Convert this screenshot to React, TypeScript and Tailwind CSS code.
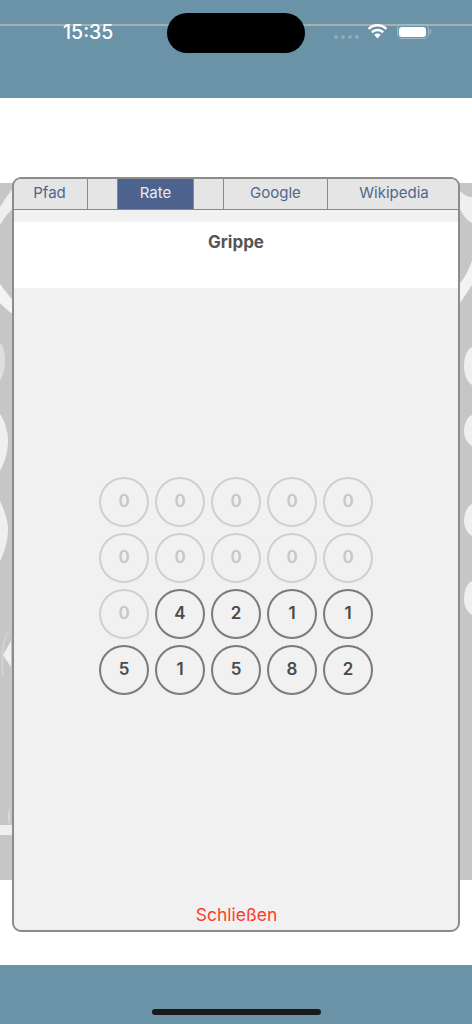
const rows = [
  [0, 0, 0, 0, 0],
  [0, 0, 0, 0, 0],
  [0, 4, 2, 1, 1],
  [5, 1, 5, 8, 2],
];

function Wifi() {
  return (
    <svg width="21" height="15" viewBox="1 1 20 14" preserveAspectRatio="none" className="block">
      <path d="M11 3.400c3 0 5.700 1.150 7.750 3.050l1.500-1.600C17.800 2.550 14.600 1.100 11 1.100S4.200 2.550 1.750 4.850l1.500 1.600C5.300 4.550 8 3.400 11 3.400z" fill="#fff" />
      <path d="M11 7.800c1.800 0 3.400.7 4.600 1.800l1.550-1.650C15.550 6.450 13.400 5.500 11 5.500s-4.550.95-6.150 2.450L6.400 9.600C7.600 8.500 9.200 7.800 11 7.800z" fill="#fff" />
      <path d="M11 9.900c-1.200 0-2.300.45-3.100 1.200L11 14.600l3.100-3.500c-.8-.75-1.900-1.200-3.100-1.200z" fill="#fff" />
    </svg>
  );
}

function Battery() {
  return (
    <div className="flex items-center gap-[1px]">
      <div className="flex h-[15px] w-[32px] items-center justify-center rounded-[5px] border border-[#a3bac6] p-[1.500px]">
        <div className="h-full w-full rounded-[3px] bg-white" />
      </div>
      <div className="h-[5px] w-[1.500px] rounded-r-sm bg-[#a3bac6]" />
    </div>
  );
}

function Backdrop() {
  return (
    <svg className="absolute left-0 top-[183px] h-[697px] w-[472px]" viewBox="0 0 472 697" preserveAspectRatio="none">
      <rect width="472" height="697" fill="#c6c6c6" />
      <path d="M0 24C5 16 9 10 14 4V24C9 29 4 35 0 42Z" fill="#efefef" />
      <path d="M0 101C5 108 10 114 14 118V132C8 128 4 124 0 120Z" fill="#f3f3f3" />
      <path d="M0 160C3 162 5 168 5 178C5 188 2 194 0 198Z" fill="#dedede" />
      <path d="M0 231C4 236 8 248 8 258C8 272 3 282 0 288Z" fill="#efefef" />
      <path d="M0 318C4 326 8 338 8 346C8 360 3 372 0 378Z" fill="#efefef" />
      <path d="M11 458 3 472 11 484Z" fill="#f0f0f0" />
      <path d="M9 448C3 456 1 470 3 492" fill="none" stroke="#d2d2d2" strokeWidth="2" />
      <path d="M10 625C7 630 7 638 10 642Z" fill="#d8d8d8" />
      <rect y="642" width="14" height="10" fill="#efefef" />
      <path d="M460 26C464 34 468 38 472 40V14C468 14 464 12 460 8Z" fill="#efefef" />
      <path d="M460 120C464 114 468 108 472 102V78C468 88 464 96 460 100Z" fill="#f3f3f3" />
      <path d="M472 164C467 166 464 174 464 183C464 192 468 200 472 202Z" fill="#efefef" />
      <path d="M472 232C467 234 464 241 464 248C464 255 468 261 472 263Z" fill="#efefef" />
      <path d="M472 321C467 323 464 331 464 338C464 345 468 351 472 353Z" fill="#efefef" />
      <path d="M472 398C467 400 464 408 464 416C464 424 468 430 472 432Z" fill="#efefef" />
    </svg>
  );
}

function Tab({ label, className }: { label?: string; className: string }) {
  return (
    <div className={`flex h-full items-center justify-center border-r border-[#6a93a8] pb-[2px] text-[15px] ${className}`}>
      {label}
    </div>
  );
}

export default function App() {
  return (
    <div className="relative flex h-[1024px] w-[472px] flex-col overflow-hidden bg-white font-['Inter','Liberation_Sans',sans-serif]">
      <Backdrop />

      <header className="relative flex h-[98px] items-start bg-[#6a93a8]">
        <div className="absolute left-0 right-0 top-[24px] h-[2px] bg-[#a9aeb0]" />
        <div className="absolute left-[167px] top-[13px] h-[40px] w-[138px] rounded-[20px] bg-black" />
        <div className="relative flex w-full items-center pl-[63px] pr-[41px] pt-[22px]">
          <span className="text-[19.500px] font-medium leading-[21px] text-white">15:35</span>
          <div className="ml-auto flex items-center">
            <div className="mr-[8px] flex gap-[3px] pt-[9px]">
              <span className="h-[4px] w-[4px] rounded-full bg-[#8eabbb]" />
              <span className="h-[4px] w-[4px] rounded-full bg-[#8eabbb]" />
              <span className="h-[4px] w-[4px] rounded-full bg-[#8eabbb]" />
              <span className="h-[4px] w-[4px] rounded-full bg-[#8eabbb]" />
            </div>
            <div className="mr-[8.500px] -translate-y-[1px]">
              <Wifi />
            </div>
            <div className="-translate-y-[1px]">
              <Battery />
            </div>
          </div>
        </div>
      </header>

      <main className="relative flex-1 px-3 pt-[79px]">
        <section className="flex h-[755px] flex-col overflow-hidden rounded-[9px] border-2 border-[#8c8c8c] bg-[#f1f1f1]">
          <nav className="flex h-[31px] shrink-0 items-stretch border-b border-[#6a93a8] bg-[#e5e5e5] text-[#4f658f]">
            <Tab label="Pfad" className="w-[74px] pr-[2px]" />
            <Tab className="w-[30px]" />
            <Tab label="Rate" className="w-[76px] bg-[#4d628c] text-[#e8ebf1]" />
            <Tab className="w-[30px]" />
            <Tab label="Google" className="w-[104px]" />
            <div className="flex h-full flex-1 items-center justify-center pb-[2px] pl-[2px] text-[15px]">Wikipedia</div>
          </nav>

          <div className="mt-[12px] flex h-[66px] shrink-0 justify-center bg-white pt-[10px]">
            <h1 className="text-[17px] font-bold leading-[20px] text-[#555555]">Grippe</h1>
          </div>

          <div className="flex flex-1 items-center justify-center">
            <div className="grid grid-cols-5 gap-[6px]">
              {rows.flat().map((n, i) => (
                <div
                  key={i}
                  className={
                    n === 0
                      ? "flex h-[50px] w-[50px] items-center justify-center rounded-full border-2 border-[#d0d0d0] text-[17px] font-semibold text-[#c6c6c6]"
                      : "flex h-[50px] w-[50px] items-center justify-center rounded-full border-2 border-[#7a7a7a] text-[17px] font-semibold text-[#4a4a4a]"
                  }
                >
                  {n}
                </div>
              ))}
            </div>
          </div>

          <div className="flex h-[47px] shrink-0 items-end justify-center pb-[3px] pl-[1px]">
            <span className="text-[17.500px] leading-[24px] text-[#ff3b30]">Schließen</span>
          </div>
        </section>
      </main>

      <footer className="relative flex h-[59px] items-end justify-center bg-[#6a93a8] pb-[9px]">
        <div className="h-[6px] w-[169px] rounded-full bg-[#1a1a1a]" />
      </footer>
    </div>
  );
}
